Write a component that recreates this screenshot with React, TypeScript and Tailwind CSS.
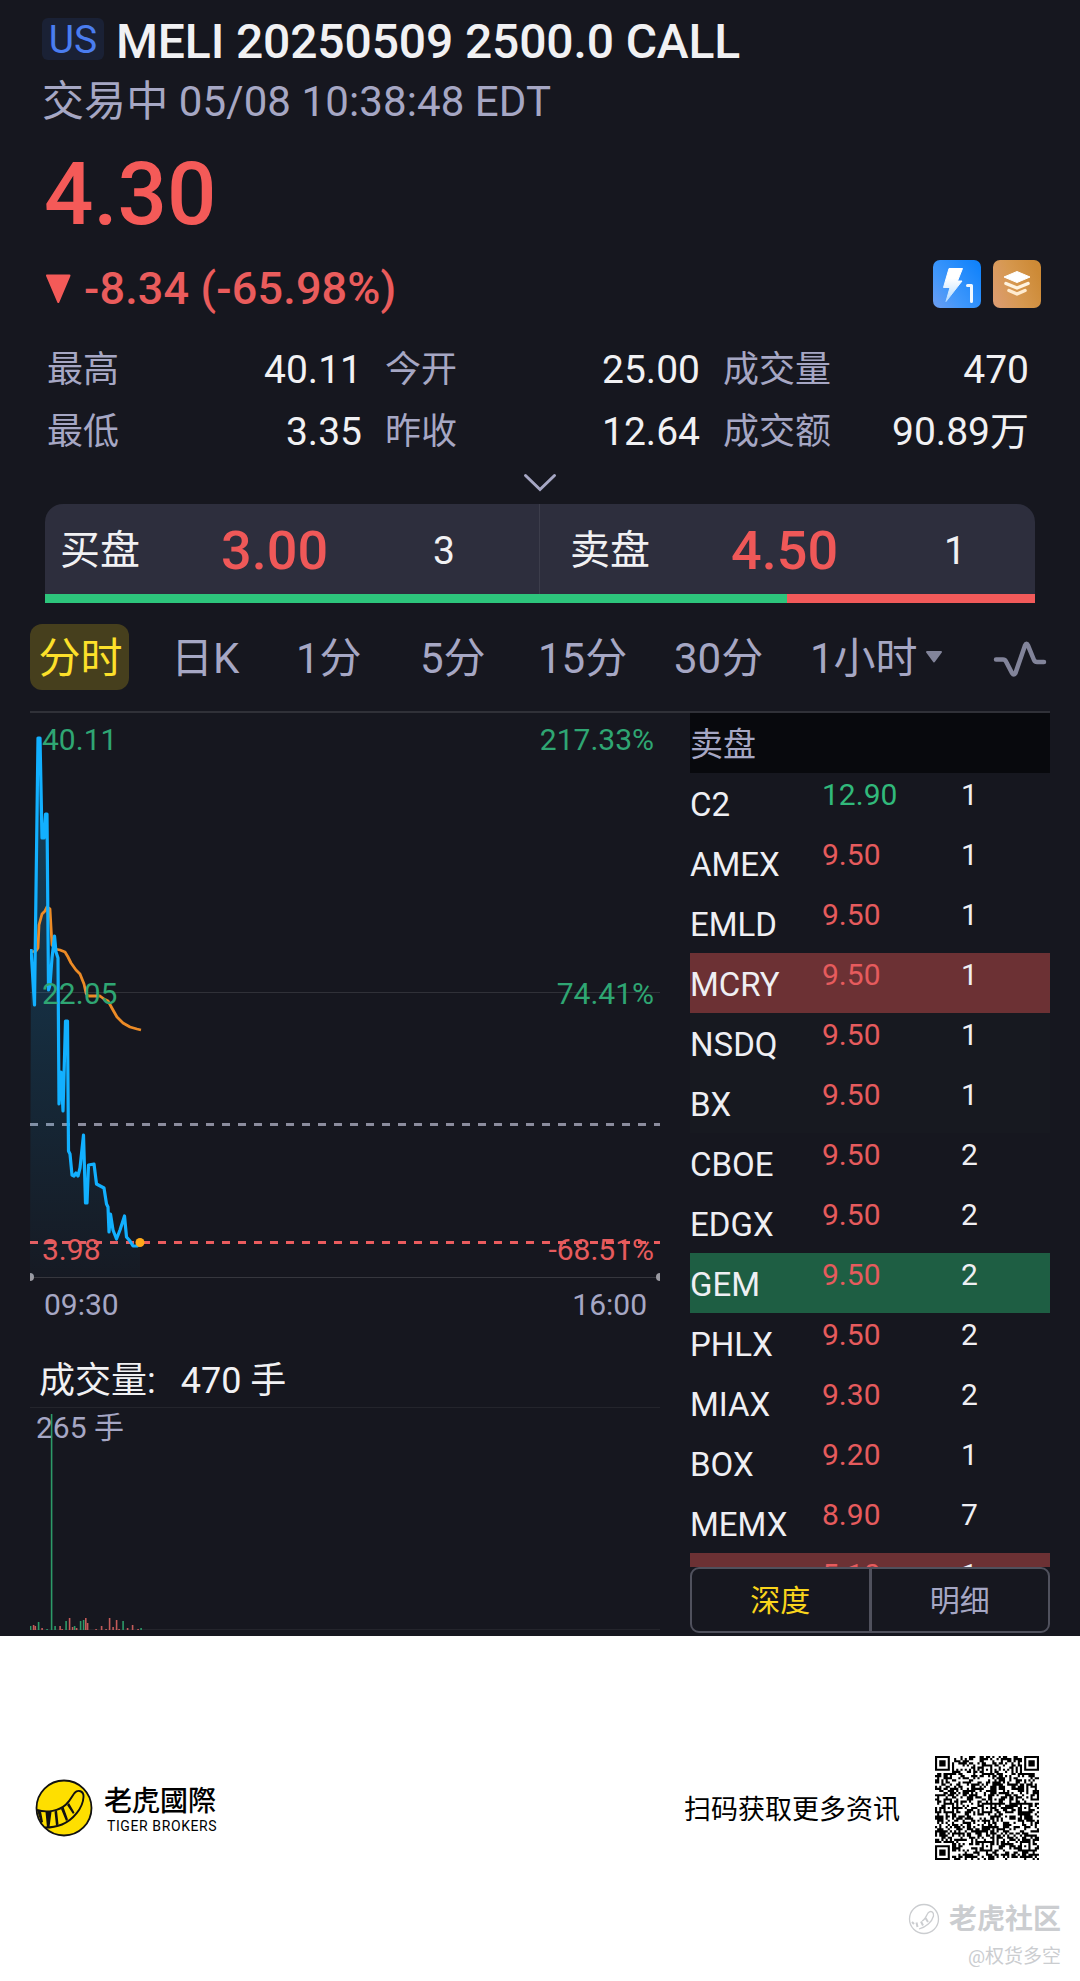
import React from 'react';

const stats = [
  { label: '最高', value: '40.11' },
  { label: '今开', value: '25.00' },
  { label: '成交量', value: '470' },
  { label: '最低', value: '3.35' },
  { label: '昨收', value: '12.64' },
  { label: '成交额', value: '90.89万' },
];

const asks = [
  { name: 'C2', price: '12.90', size: 1, up: true, bg: '' },
  { name: 'AMEX', price: '9.50', size: 1, up: false, bg: '' },
  { name: 'EMLD', price: '9.50', size: 1, up: false, bg: '' },
  { name: 'MCRY', price: '9.50', size: 1, up: false, bg: 'bg-[#6c3134]' },
  { name: 'NSDQ', price: '9.50', size: 1, up: false, bg: 'bg-[#171920]' },
  { name: 'BX', price: '9.50', size: 1, up: false, bg: 'bg-[#171920]' },
  { name: 'CBOE', price: '9.50', size: 2, up: false, bg: '' },
  { name: 'EDGX', price: '9.50', size: 2, up: false, bg: '' },
  { name: 'GEM', price: '9.50', size: 2, up: false, bg: 'bg-[#1e5e43]' },
  { name: 'PHLX', price: '9.50', size: 2, up: false, bg: '' },
  { name: 'MIAX', price: '9.30', size: 2, up: false, bg: '' },
  { name: 'BOX', price: '9.20', size: 1, up: false, bg: '' },
  { name: 'MEMX', price: '8.90', size: 7, up: false, bg: '' },
  { name: '', price: '5.10', size: 1, up: false, bg: 'bg-[#6c3134]' },
];

const pricePoints =
  '31,949 34.5,1005 38,738 40,738 42,838 44,838 45.5,814 47,814 48.5,990 50,985 52,958 54.5,936 56,952 58,958 59,1104 61,1072 63,1111 65.5,1021 67.5,1021 68.5,1151 70,1154 72,1175 74,1176 76,1173 78,1176 80,1168 83.5,1135 85.5,1203 87,1203 88.5,1165 94,1164 96.5,1184 104,1188 106.5,1204 108,1207 109,1232 110.5,1214 113,1230 116.5,1239 120,1230 124.5,1216 126.5,1237 130,1241 133,1246 137,1246 140,1243';

const averagePoints =
  '31,952 36,951 38,948 39,925 42,914 45,911 47,907 50,909 52,945 55,949 60,950 65,952 68,957 71,963 76,970 80,974 84,984 86,993 88,996 100,996 104,999 108,1001 113,1010 117,1017 123,1023 130,1027 137,1029 141,1030';

// [x, height, rising]
const volumes: [number, number, boolean][] = [
  [30.5, 4, true], [33.5, 5, false], [35.2, 4, false], [38.5, 8, true], [42, 2, false],
  [47, 1, true], [51.5, 216, true], [55, 4, true], [60, 4, false], [62, 1, false], [66, 9, true],
  [69.5, 12, false], [72.5, 3, false], [74.5, 4, true], [76.5, 2, false], [80.5, 9, true],
  [83.5, 10, true], [85.7, 12, false], [87.5, 7, false], [96, 1, false], [101.5, 4, false],
  [106, 1, false], [109.5, 12, false], [113, 3, false], [116.5, 10, false], [119, 1, false],
  [123, 9, true], [127.5, 2, false], [132.5, 5, false], [138, 1, false], [141, 2, true],
];

const QR_SIZE = 49;
const QR_ALIGN = [6, 24, 42];

function ring(dx: number, dy: number) {
  return Math.max(Math.abs(dx), Math.abs(dy));
}

function buildQr() {
  let seed = 20250509;
  let d = '';
  const corners = [[3, 3], [45, 3], [3, 45]];
  for (let y = 0; y < QR_SIZE; y++) {
    for (let x = 0; x < QR_SIZE; x++) {
      seed = (seed * 1103515245 + 12345) % 2147483648;
      let on = (seed >> 16) % 100 < 51;
      if (x === 6 || y === 6) on = (x + y) % 2 === 0;
      for (const ax of QR_ALIGN) {
        for (const ay of QR_ALIGN) {
          const r = ring(x - ax, y - ay);
          if (r <= 2) on = r !== 1;
        }
      }
      for (const [cx, cy] of corners) {
        const r = ring(x - cx, y - cy);
        if (r <= 4) on = r !== 2 && r !== 4;
      }
      if (on) d += `M${x} ${y}h1v1h-1z`;
    }
  }
  return d;
}

const qrPath = buildQr();

function QrCode() {
  return (
    <svg className="w-[104px] h-[104px]" viewBox="0 0 49 49">
      <path d={qrPath} fill="#000" />
    </svg>
  );
}

function FlashIcon() {
  return (
    <svg className="w-12 h-12" viewBox="0 0 48 48">
      <defs>
        <linearGradient id="flashBg" x1="0" y1="1" x2="1" y2="0.2">
          <stop offset="0" stopColor="#6d9df0" />
          <stop offset="0.4" stopColor="#3f97fb" />
          <stop offset="1" stopColor="#1283fb" />
        </linearGradient>
        <linearGradient id="flashBolt" x1="0" y1="0" x2="0" y2="1">
          <stop offset="0.3" stopColor="#fff" />
          <stop offset="1" stopColor="#b4dbff" />
        </linearGradient>
      </defs>
      <rect width="48" height="48" rx="7" fill="url(#flashBg)" />
      <path d="M16 8.500H29.500L24.500 21H29L13 41.500L17 27.500H10.500Z" fill="url(#flashBolt)" stroke="url(#flashBolt)" strokeWidth="1" strokeLinejoin="round" />
      <path d="M34.500 25.500h4v16" fill="none" stroke="#f1f8ff" strokeWidth="3" strokeLinecap="round" strokeLinejoin="round" />
    </svg>
  );
}

function LayersIcon() {
  return (
    <svg className="w-12 h-12" viewBox="0 0 48 48">
      <defs>
        <linearGradient id="layersBg" x1="0" y1="0.8" x2="1" y2="0.4">
          <stop offset="0" stopColor="#dc9c70" />
          <stop offset="0.5" stopColor="#d6984f" />
          <stop offset="1" stopColor="#cd8a36" />
        </linearGradient>
      </defs>
      <rect width="48" height="48" rx="7" fill="url(#layersBg)" />
      <path d="M24 11.500L37 17L24 22.500L11 17Z" fill="#fff" stroke="#fff" strokeLinejoin="round" />
      <path d="M13 23.500L24 28L35 23.500" fill="none" stroke="#fff3df" strokeWidth="3.500" strokeLinecap="round" strokeLinejoin="round" />
      <path d="M16 30.500L24 34L32 30.500" fill="none" stroke="#ffecd0" strokeWidth="3.500" strokeLinecap="round" strokeLinejoin="round" />
    </svg>
  );
}

function TigerLogo() {
  return (
    <svg className="w-[58px] h-[58px]" viewBox="0 0 58 58">
      <circle cx="29" cy="29" r="27.500" fill="#fedf00" stroke="#111" strokeWidth="1.800" />
      <path d="M2 31C12 34 24 32 31 25.500C36 21 37 17 39.500 14C43 10 49 12 48.500 18C48 29 38 41 27 45.500C22 47.500 16 48.500 10 48.500" fill="none" stroke="#111" strokeWidth="1.900" />
      <path d="M2 31L6 32.500L8 43L6 44Z M10.500 33L16.500 33L14.500 48L12 48.500Z M19.500 32.500L22 31.500L23.500 45.500L21 46.500Z M26 30L28.500 28L33 40.500L31 42Z M32 26L34 24L39.500 33.500L38 35Z" fill="#111" />
    </svg>
  );
}

function WatermarkLogo() {
  return (
    <svg className="w-8 h-8" viewBox="0 0 32 32" fill="none" stroke="#cbcdd0" strokeWidth="1.300">
      <circle cx="16" cy="16" r="14.500" />
      <path d="M14 18C17 17 18 13 20 10C23 7 26 9 25.500 13C24 19 18 24 11 26" />
      <path d="M4 19L6 21M8.500 19.500L9.500 24M13 18.500L15 22.500M17.500 15L20 19" strokeWidth="2" />
    </svg>
  );
}

function PriceChart() {
  return (
    <svg className="block w-[630px] h-[607px]" viewBox="30 713 630 607" fontSize="30">
      <defs>
        <linearGradient id="area" gradientUnits="userSpaceOnUse" x1="0" y1="738" x2="0" y2="1277">
          <stop offset="0" stopColor="#12b0ff" stopOpacity="0.28" />
          <stop offset="1" stopColor="#12b0ff" stopOpacity="0.02" />
        </linearGradient>
      </defs>
      <path d="M30 992.500H660" stroke="#303138" strokeWidth="1" />
      <path d="M30 1277.500H660" stroke="#36373e" strokeWidth="1" />
      <circle cx="30" cy="1277" r="4" fill="#9a9aa2" />
      <circle cx="660" cy="1277" r="4" fill="#9a9aa2" />
      <path d="M30 1124.500H660" stroke="#8b8c9d" strokeWidth="3" strokeDasharray="8 8" />
      <path d="M30 1242.500H660" stroke="#ea5c5e" strokeWidth="3" strokeDasharray="8 8" />
      <polygon points={`30,1277 ${pricePoints} 140,1277`} fill="url(#area)" />
      <polyline points={averagePoints} fill="none" stroke="#ec8b26" strokeWidth="2.800" strokeLinejoin="round" />
      <polyline points={pricePoints} fill="none" stroke="#12b0ff" strokeWidth="3.200" strokeLinejoin="round" />
      <circle cx="140" cy="1242.500" r="4.500" fill="#ffa818" />
      <g fill="#2fa673">
        <text x="42" y="749.500">40.11</text>
        <text x="654" y="749.500" textAnchor="end">217.33%</text>
        <text x="42" y="1004">22.05</text>
        <text x="654" y="1004" textAnchor="end">74.41%</text>
      </g>
      <g fill="#e65b5d">
        <text x="42" y="1260">3.98</text>
        <text x="654" y="1260" textAnchor="end">-68.51%</text>
      </g>
      <g fill="#a6a7c4">
        <text x="44" y="1314.500">09:30</text>
        <text x="647" y="1314.500" textAnchor="end">16:00</text>
      </g>
    </svg>
  );
}

function VolumeChart() {
  return (
    <svg className="block w-[630px] h-[229px]" viewBox="30 1407 630 229">
      <path d="M30 1407.500H660M30 1629.500H660" stroke="#24252c" strokeWidth="1" />
      <text x="36" y="1437.500" fontSize="30" fill="#a6a7c4">265 手</text>
      {volumes.map(([x, h, rising]) => (
        <rect key={x} x={x - 0.7} y={1630 - h} width="1.600" height={h} fill={rising ? '#2c9a68' : '#c45b59'} />
      ))}
    </svg>
  );
}

function OrderBook() {
  return (
    <div className="w-[360px] flex flex-col">
      <div className="h-[60px] bg-[#08090d] text-[33px] leading-[64px] text-[#a6a7c4]">卖盘</div>
      <div className="h-[794px] overflow-hidden">
        {asks.map((row, i) => (
          <div key={i} className={`flex h-[60px] text-[#efeff3] ${row.bg}`}>
            <div className="w-[132px] text-[33px] leading-[64px]">{row.name}</div>
            <div
              className={`w-[139px] text-[30px] leading-[43px] ${row.up ? 'text-[#31b97b]' : 'text-[#e65b5d]'}`}
            >
              {row.price}
            </div>
            <div className="text-[30px] leading-[43px]">{row.size}</div>
          </div>
        ))}
      </div>
      <div className="flex h-[66px] rounded-[9px] border-2 border-[#50515d] text-[30px] leading-[63px] text-center">
        <div className="flex-1 text-[#f9d51c]">深度</div>
        <div className="w-[3px] bg-[#50515d]" />
        <div className="flex-1 text-[#a6a7c4]">明细</div>
      </div>
    </div>
  );
}

export default function App() {
  return (
    <div className="w-[1080px] h-[1981px] overflow-hidden flex flex-col bg-white font-[Roboto,'Noto_Sans_CJK_SC',sans-serif]">
      <div className="h-[1636px] bg-[#16171f] flex flex-col">
        {/* Title */}
        <div className="flex items-start pt-3 pl-[42px]">
          <div className="w-[62px] h-[42px] mt-[6px] rounded-md bg-[#1a2135] text-[#4a7df0] text-[39px] leading-[44px] text-center">
            US
          </div>
          <h1 className="ml-3 text-[48px] leading-[60px] tracking-[-0.13px] font-medium text-[#f1f1f3]">
            MELI 20250509 2500.0 CALL
          </h1>
        </div>
        <div className="mt-[2px] pl-[42px] text-[42px] leading-[56px] tracking-[0.1px] text-[#a6a7c4]">
          交易中 05/08 10:38:48 EDT
        </div>

        {/* Last price */}
        <div className="mt-[14px] pl-[44px] text-[87px] leading-[100px] font-medium text-[#f45a58]">4.30</div>
        <div className="mt-4 h-[79px] pl-[45px] pr-[39px] flex items-start justify-between">
          <div className="flex items-start">
            <svg className="w-[27px] h-[30px] mt-[14px]" viewBox="0 0 27 30">
              <path d="M2 1.500H24.500L13.300 28Z" fill="#f45a58" stroke="#f45a58" strokeWidth="2" strokeLinejoin="round" />
            </svg>
            <span className="ml-3 pt-px text-[45px] leading-[56px] tracking-[0.15px] font-medium text-[#ea5c5c]">
              -8.34 (-65.98%)
            </span>
          </div>
          <div className="flex gap-3">
            <FlashIcon />
            <LayersIcon />
          </div>
        </div>

        {/* Day stats */}
        <div className="grid grid-cols-[315px_315px_306px] gap-x-[23px] pl-[47px]">
          {stats.map((item) => (
            <div key={item.label} className="flex justify-between leading-[62px]">
              <span className="text-[36px] text-[#a6a7c4]">{item.label}</span>
              <span className="text-[39px] text-[#f1f1f3]">{item.value}</span>
            </div>
          ))}
        </div>
        <div className="h-[41px] flex justify-center pt-[10px]">
          <svg className="w-[34px] h-[20px]" viewBox="0 0 34 20">
            <path d="M2.500 2.500L17 16.500L31.500 2.500" fill="none" stroke="#a6a7c4" strokeWidth="3" strokeLinecap="round" />
          </svg>
        </div>

        {/* Best bid and ask */}
        <div className="mx-[45px]">
          <div className="h-[90px] flex rounded-t-[18px] bg-[#2d2e3d] text-[#f1f1f3] leading-[90px]">
            <div className="w-[495px] flex pl-[15px] border-r border-[#3c3d4b]">
              <span className="w-[161px] text-[40px] pt-[2px]">买盘</span>
              <span className="w-[212px] text-[54px] pt-[2px] font-medium text-[#ef5858]">3.00</span>
              <span className="text-[39px] pt-[2px]">3</span>
            </div>
            <div className="w-[495px] flex pl-[30px]">
              <span className="w-[161px] text-[40px] pt-[2px]">卖盘</span>
              <span className="w-[213px] text-[54px] pt-[2px] font-medium text-[#ef5858]">4.50</span>
              <span className="text-[39px] pt-[2px]">1</span>
            </div>
          </div>
          <div className="flex h-[9px]">
            <div className="w-[742px] bg-[#2dc57c]" />
            <div className="flex-1 bg-[#f25a5a]" />
          </div>
        </div>

        {/* Period tabs */}
        <div className="mt-[21px] ml-[30px] h-[66px] flex text-[42px] leading-[70px] text-[#a6a7c4]">
          <div className="w-[99px] pl-[2px] rounded-xl bg-[#463f1d] text-[#fde02a] text-center">分时</div>
          <div className="ml-[42px] w-[125px]">日K</div>
          <div className="w-[124px]">1分</div>
          <div className="w-[118px]">5分</div>
          <div className="w-[136px]">15分</div>
          <div className="w-[136px]">30分</div>
          <div>1小时</div>
          <svg className="ml-[7px] mt-[26px] w-[18px] h-[14px]" viewBox="0 0 18 14">
            <path d="M2 2H16L9 11.500Z" fill="#82849a" stroke="#82849a" strokeWidth="2" strokeLinejoin="round" />
          </svg>
          <svg className="ml-[49px] mt-[15px] w-[56px] h-[40px]" viewBox="0 0 56 40">
            <path d="M4 20.500H11Q13 20.500 14 22.500L20 34Q22 37 23.500 34L33 6.500Q34.500 3 36 6.500L42 21Q43 23 45 23H52" fill="none" stroke="#82849a" strokeWidth="4.500" strokeLinecap="round" strokeLinejoin="round" />
          </svg>
        </div>

        <div className="mt-[21px] mx-[30px] h-[2px] bg-[#303138]" />

        {/* Charts and order book */}
        <div className="flex h-[923px] justify-between px-[30px]">
          <div className="w-[630px] flex flex-col">
            <PriceChart />
            <div className="h-[87px] pl-[9px] text-[36px] leading-[123px] text-[#f1f1f3]">
              成交量:<span className="ml-[25px]">470 手</span>
            </div>
            <VolumeChart />
          </div>
          <OrderBook />
        </div>
      </div>

      {/* Share footer */}
      <div className="flex items-center h-[104px] mt-[120px] pl-[35px] pr-[41px] text-black">
        <TigerLogo />
        <div className="ml-[11px] pt-1">
          <div className="text-[28px] leading-[32px] font-medium font-[Roboto,'Noto_Sans_CJK_TC',sans-serif]">老虎國際</div>
          <div className="pl-[3px] text-[14px] leading-[16px] tracking-[0.6px]">TIGER BROKERS</div>
        </div>
        <div className="ml-auto mr-[35px] pt-[3px] text-[27px] leading-[40px]">扫码获取更多资讯</div>
        <QrCode />
      </div>

      <div className="flex flex-col items-end mt-[38px] pr-[19px] text-[#cbcdd0]">
        <div className="flex items-center h-[42px]">
          <WatermarkLogo />
          <span className="ml-[9px] pt-px text-[28px] leading-[40px] font-bold">老虎社区</span>
        </div>
        <div className="pt-[2px] text-[19px] leading-[30px]">@权货多空</div>
      </div>
    </div>
  );
}
